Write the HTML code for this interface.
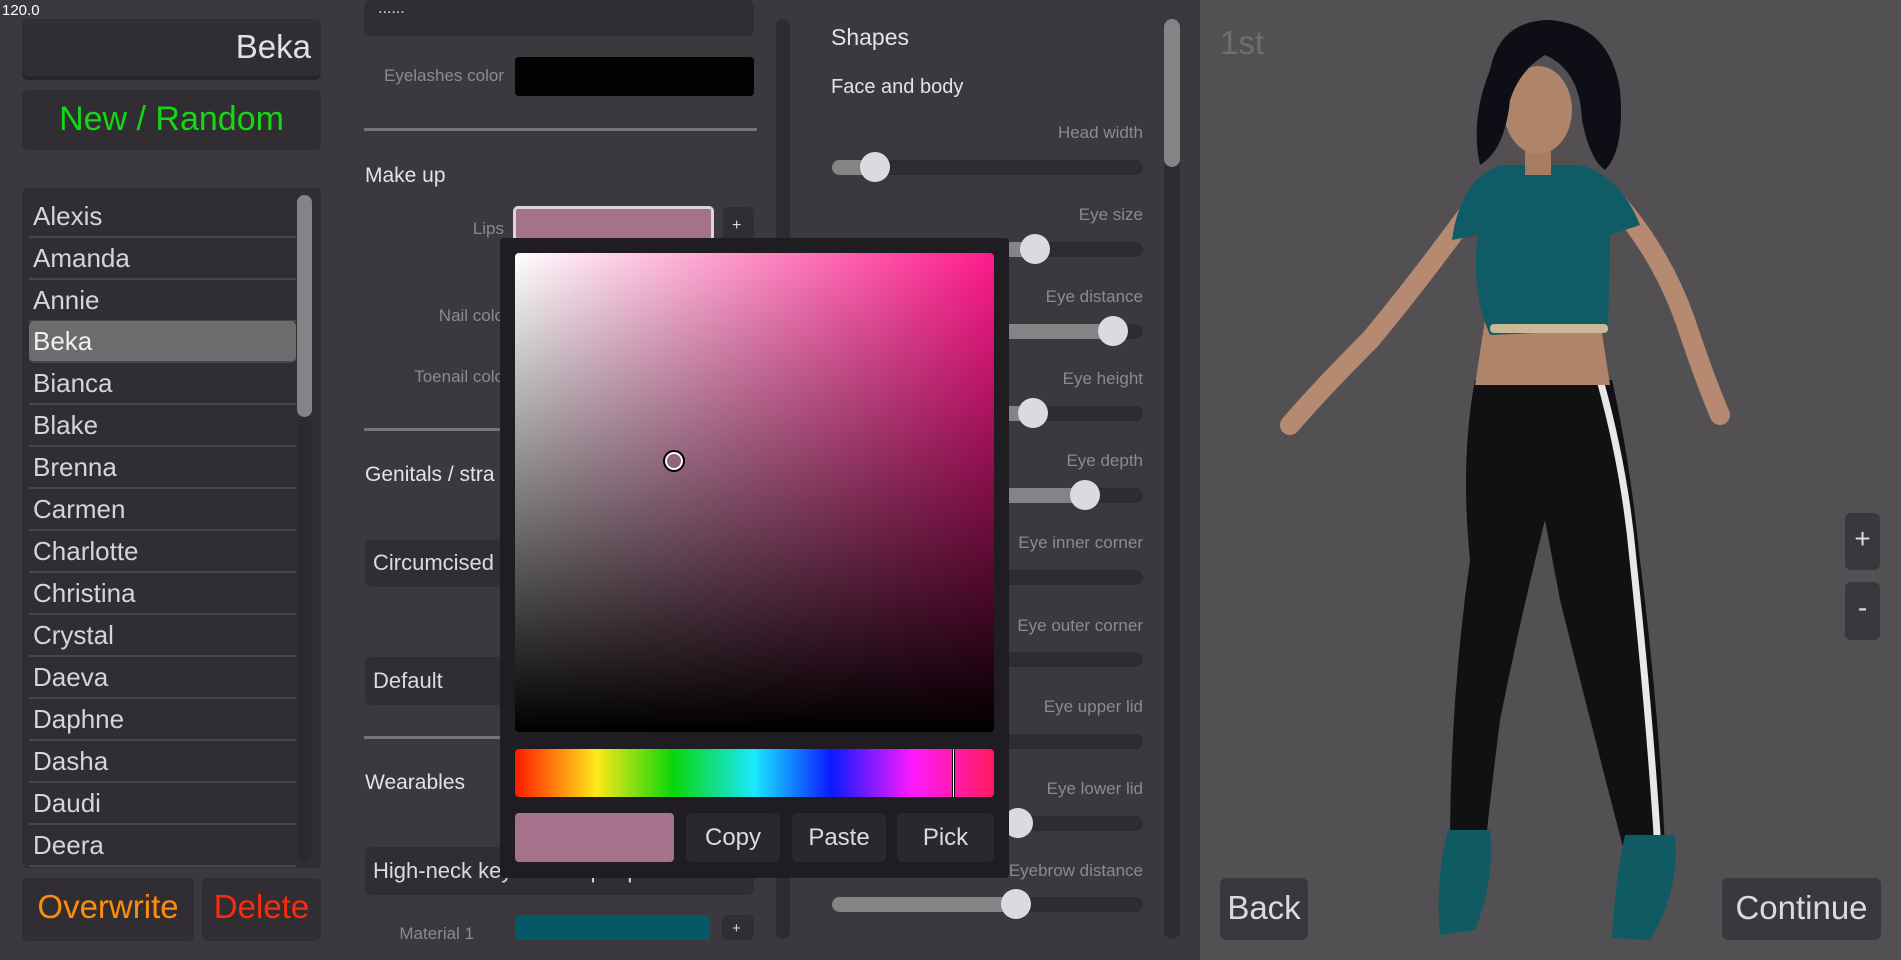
<!DOCTYPE html>
<html><head><meta charset="utf-8">
<style>
*{margin:0;padding:0;box-sizing:border-box}
body{width:1901px;height:960px;overflow:hidden;background:#3b393d;font-family:"Liberation Sans","DejaVu Sans",sans-serif;position:relative;color:#dcdadd}
.a{position:absolute}
.btn{position:absolute;background:#302e32;border-radius:6px}
.lbl{position:absolute;color:#8c8a8d;font-size:17px;text-align:right;white-space:nowrap}
.row{position:absolute;left:29px;width:267px;height:42px;border-bottom:2px solid #48464a;font-size:26px;padding-left:4px;line-height:40px;color:#d6d4d7}
.track{position:absolute;left:832px;width:311px;height:15px;border-radius:8px;background:#2e2c30}
.fill{position:absolute;left:0;top:0;height:15px;border-radius:8px;background:#858386}
.knob{position:absolute;width:30px;height:30px;border-radius:50%;background:#dcdadf;top:-8px}
.hd{position:absolute;font-size:21px;color:#e4e2e5}
.sep{position:absolute;left:364px;width:393px;height:3px;background:#77757a}
</style></head><body>
<div class="a" style="left:0;top:0;width:1200px;height:960px;background:#3b393d"></div>
<div class="a" style="left:1200px;top:0;width:701px;height:960px;background:#525053"></div>
<div class="a" style="left:2px;top:2px;font-size:15px;color:#fff">120.0</div>

<!-- left column -->
<div class="btn" style="left:22px;top:19px;width:299px;height:61px;border-bottom:4px solid #27252a"></div>
<div class="a" style="left:22px;top:28px;width:289px;text-align:right;font-size:33px;color:#e2e0e3">Beka</div>
<div class="btn" style="left:22px;top:90px;width:299px;height:60px"></div>
<div class="a" style="left:22px;top:100px;width:299px;text-align:center;font-size:34px;color:#13d813">New / Random</div>

<div class="btn" style="left:22px;top:188px;width:299px;height:680px"></div>
<div class="a" style="left:297px;top:195px;width:15px;height:222px;background:#858386;border-radius:8px"></div>
<div class="a" style="left:297px;top:417px;width:15px;height:445px;background:#2b292d;border-radius:8px"></div>
<div class="row" style="top:196px">Alexis</div>
<div class="row" style="top:238px">Amanda</div>
<div class="row" style="top:280px">Annie</div>
<div class="row" style="top:321px;background:#6d6b6e;border-radius:5px;color:#f0eef1">Beka</div>
<div class="row" style="top:363px">Bianca</div>
<div class="row" style="top:405px">Blake</div>
<div class="row" style="top:447px">Brenna</div>
<div class="row" style="top:489px">Carmen</div>
<div class="row" style="top:531px">Charlotte</div>
<div class="row" style="top:573px">Christina</div>
<div class="row" style="top:615px">Crystal</div>
<div class="row" style="top:657px">Daeva</div>
<div class="row" style="top:699px">Daphne</div>
<div class="row" style="top:741px">Dasha</div>
<div class="row" style="top:783px">Daudi</div>
<div class="row" style="top:825px">Deera</div>

<div class="btn" style="left:22px;top:878px;width:172px;height:63px"></div>
<div class="a" style="left:22px;top:888px;width:172px;text-align:center;font-size:33px;color:#ff8c0a">Overwrite</div>
<div class="btn" style="left:202px;top:878px;width:119px;height:63px"></div>
<div class="a" style="left:202px;top:888px;width:119px;text-align:center;font-size:33px;color:#ff2a0a">Delete</div>

<!-- middle column -->
<div class="btn" style="left:364px;top:0;width:390px;height:36px"></div>
<div class="a" style="left:378px;top:0;font-size:16px;color:#ddd">......</div>
<div class="lbl" style="left:364px;top:66px;width:140px">Eyelashes color</div>
<div class="a" style="left:515px;top:57px;width:239px;height:39px;background:#020202;border-radius:4px"></div>
<div class="sep" style="top:128px"></div>
<div class="hd" style="left:365px;top:164px">Make up</div>
<div class="lbl" style="left:364px;top:219px;width:140px">Lips</div>
<div class="a" style="left:513px;top:206px;width:201px;height:44px;background:#a6718a;border:3px solid #d9d7da;border-radius:5px"></div>
<div class="btn" style="left:723px;top:207px;width:31px;height:42px"></div>
<div class="a" style="left:732px;top:217px;font-size:16px;color:#ddd">+</div>
<div class="lbl" style="left:364px;top:306px;width:140px">Nail colo</div>
<div class="lbl" style="left:364px;top:367px;width:140px">Toenail colo</div>
<div class="sep" style="top:428px"></div>
<div class="hd" style="left:365px;top:463px">Genitals / stra</div>
<div class="btn" style="left:365px;top:540px;width:390px;height:47px"></div>
<div class="a" style="left:373px;top:550px;font-size:22px">Circumcised</div>
<div class="btn" style="left:365px;top:657px;width:390px;height:48px"></div>
<div class="a" style="left:373px;top:668px;font-size:22px">Default</div>
<div class="sep" style="top:736px"></div>
<div class="hd" style="left:365px;top:771px">Wearables</div>
<div class="btn" style="left:365px;top:847px;width:389px;height:48px"></div>
<div class="a" style="left:373px;top:858px;font-size:22px">High-neck keyhole crop top</div>
<div class="lbl" style="left:364px;top:924px;width:110px">Material 1</div>
<div class="a" style="left:515px;top:915px;width:195px;height:25px;background:#065868;border-radius:4px 4px 0 0"></div>
<div class="btn" style="left:722px;top:915px;width:32px;height:25px"></div>
<div class="a" style="left:732px;top:920px;font-size:15px">+</div>
<div class="a" style="left:776px;top:19px;width:14px;height:920px;background:#2e2c30;border-radius:7px"></div>
<div class="a" style="left:0;top:941px;width:1200px;height:19px;background:#3b393d"></div>

<!-- right settings column -->
<div class="a" style="left:831px;top:24px;font-size:23px;color:#e4e2e5">Shapes</div>
<div class="a" style="left:831px;top:76px;font-size:20px;color:#e4e2e5">Face and body</div>
<div class="a" style="left:1164px;top:19px;width:16px;height:920px;background:#2e2c30;border-radius:8px"></div>
<div class="a" style="left:1164px;top:19px;width:16px;height:148px;background:#858386;border-radius:8px"></div>

<div class="lbl" style="left:950px;top:123px;width:193px">Head width</div>
<div class="track" style="top:160px"><div class="fill" style="width:42px"></div><div class="knob" style="left:28px"></div></div>
<div class="lbl" style="left:950px;top:205px;width:193px">Eye size</div>
<div class="track" style="top:242px"><div class="fill" style="width:202px"></div><div class="knob" style="left:188px"></div></div>
<div class="lbl" style="left:950px;top:287px;width:193px">Eye distance</div>
<div class="track" style="top:324px"><div class="fill" style="width:280px"></div><div class="knob" style="left:266px"></div></div>
<div class="lbl" style="left:950px;top:369px;width:193px">Eye height</div>
<div class="track" style="top:406px"><div class="fill" style="width:200px"></div><div class="knob" style="left:186px"></div></div>
<div class="lbl" style="left:950px;top:451px;width:193px">Eye depth</div>
<div class="track" style="top:488px"><div class="fill" style="width:252px"></div><div class="knob" style="left:238px"></div></div>
<div class="lbl" style="left:950px;top:533px;width:193px">Eye inner corner</div>
<div class="track" style="top:570px"><div class="fill" style="width:150px"></div></div>
<div class="lbl" style="left:950px;top:616px;width:193px">Eye outer corner</div>
<div class="track" style="top:652px"><div class="fill" style="width:150px"></div></div>
<div class="lbl" style="left:950px;top:697px;width:193px">Eye upper lid</div>
<div class="track" style="top:734px"><div class="fill" style="width:150px"></div></div>
<div class="lbl" style="left:950px;top:779px;width:193px">Eye lower lid</div>
<div class="track" style="top:816px"><div class="fill" style="width:185px"></div><div class="knob" style="left:171px"></div></div>
<div class="lbl" style="left:950px;top:861px;width:193px">Eyebrow distance</div>
<div class="track" style="top:897px"><div class="fill" style="width:183px"></div><div class="knob" style="left:169px"></div></div>

<!-- color picker popup -->
<div class="a" style="left:500px;top:238px;width:509px;height:640px;background:#1f1d21;border-radius:4px"></div>
<div class="a" style="left:515px;top:253px;width:479px;height:479px;border-radius:4px;background:linear-gradient(to bottom,rgba(0,0,0,0),#000),linear-gradient(to right,#fff,#ff1a8c)"></div>
<div class="a" style="left:663px;top:450px;width:22px;height:22px;border-radius:50%;border:2px solid #000;box-shadow:inset 0 0 0 2px #fff"></div>
<div class="a" style="left:515px;top:749px;width:479px;height:48px;border-radius:4px;background:linear-gradient(to right,#ff1a00 0%,#ffe81a 17%,#0ad60a 33%,#1ae8ff 50%,#0a1aff 66%,#ff1aff 83%,#ff1a60 100%)"></div>
<div class="a" style="left:952px;top:749px;width:3px;height:48px;background:#fff;border-left:1px solid #000;border-right:1px solid #000"></div>
<div class="a" style="left:515px;top:813px;width:159px;height:49px;background:#a6718a;border-radius:4px"></div>
<div class="btn" style="left:686px;top:813px;width:94px;height:49px;background:#2a282c"></div>
<div class="a" style="left:686px;top:824px;width:94px;text-align:center;font-size:24px">Copy</div>
<div class="btn" style="left:792px;top:813px;width:94px;height:49px;background:#2a282c"></div>
<div class="a" style="left:792px;top:824px;width:94px;text-align:center;font-size:24px">Paste</div>
<div class="btn" style="left:897px;top:813px;width:97px;height:49px;background:#2a282c"></div>
<div class="a" style="left:897px;top:824px;width:97px;text-align:center;font-size:24px">Pick</div>

<!-- viewport -->
<div class="a" style="left:1220px;top:24px;font-size:33px;color:#6f6d70">1st</div>
<svg class="a" style="left:0;top:0" width="1901" height="960">
 <!-- arms -->
 <path d="M1478 200 Q1420 280 1370 340 Q1320 390 1290 425" stroke="#b58a70" stroke-width="20" fill="none" stroke-linecap="round"/>
 <path d="M1610 195 Q1660 250 1685 320 Q1705 380 1720 415" stroke="#b58a70" stroke-width="20" fill="none" stroke-linecap="round"/>
 <!-- legs -->
 <path d="M1475 380 L1612 380 Q1630 460 1640 560 Q1660 720 1665 850 L1625 855 Q1590 720 1560 600 L1545 520 Q1520 620 1500 720 Q1490 800 1485 850 L1450 850 Q1450 700 1470 560 Q1460 460 1475 380 Z" fill="#111113"/>
 <path d="M1600 380 Q1625 470 1633 560 Q1650 720 1658 850" stroke="#e8e8e8" stroke-width="7" fill="none"/>
 <!-- boots -->
 <path d="M1448 830 L1490 830 Q1495 880 1475 930 L1440 935 Q1435 880 1448 830 Z" fill="#0f5a63"/>
 <path d="M1625 835 L1675 835 Q1680 890 1650 940 L1612 938 Q1615 880 1625 835 Z" fill="#0f5a63"/>
 <!-- midriff -->
 <path d="M1485 320 L1600 320 L1610 385 L1475 385 Z" fill="#b08468"/>
 <!-- top -->
 <path d="M1500 165 L1580 165 Q1620 175 1640 225 L1610 235 L1608 330 L1490 335 Q1470 290 1478 235 L1452 240 Q1460 180 1500 165 Z" fill="#0f5c66"/>
 <rect x="1490" y="324" width="118" height="9" rx="4" fill="#c9b996"/>
 <!-- neck/face -->
 <rect x="1525" y="135" width="26" height="40" fill="#a87c62"/>
 <ellipse cx="1538" cy="110" rx="34" ry="44" fill="#b08468"/>
 <!-- hair -->
 <path d="M1490 70 Q1500 20 1550 20 Q1610 25 1620 90 Q1625 150 1605 170 Q1590 160 1582 120 Q1580 70 1545 55 Q1520 70 1510 100 Q1505 150 1480 165 Q1470 120 1490 70 Z" fill="#0d0e16"/>
</svg>
<div class="btn" style="left:1845px;top:513px;width:35px;height:57px;background:#3a383c"></div>
<div class="a" style="left:1845px;top:523px;width:35px;text-align:center;font-size:28px">+</div>
<div class="btn" style="left:1845px;top:582px;width:35px;height:58px;background:#3a383c"></div>
<div class="a" style="left:1845px;top:592px;width:35px;text-align:center;font-size:28px">-</div>
<div class="btn" style="left:1220px;top:878px;width:88px;height:62px;background:#3a383c"></div>
<div class="a" style="left:1220px;top:889px;width:88px;text-align:center;font-size:33px">Back</div>
<div class="btn" style="left:1722px;top:878px;width:159px;height:62px;background:#3a383c"></div>
<div class="a" style="left:1722px;top:889px;width:159px;text-align:center;font-size:33px">Continue</div>
</body></html>
